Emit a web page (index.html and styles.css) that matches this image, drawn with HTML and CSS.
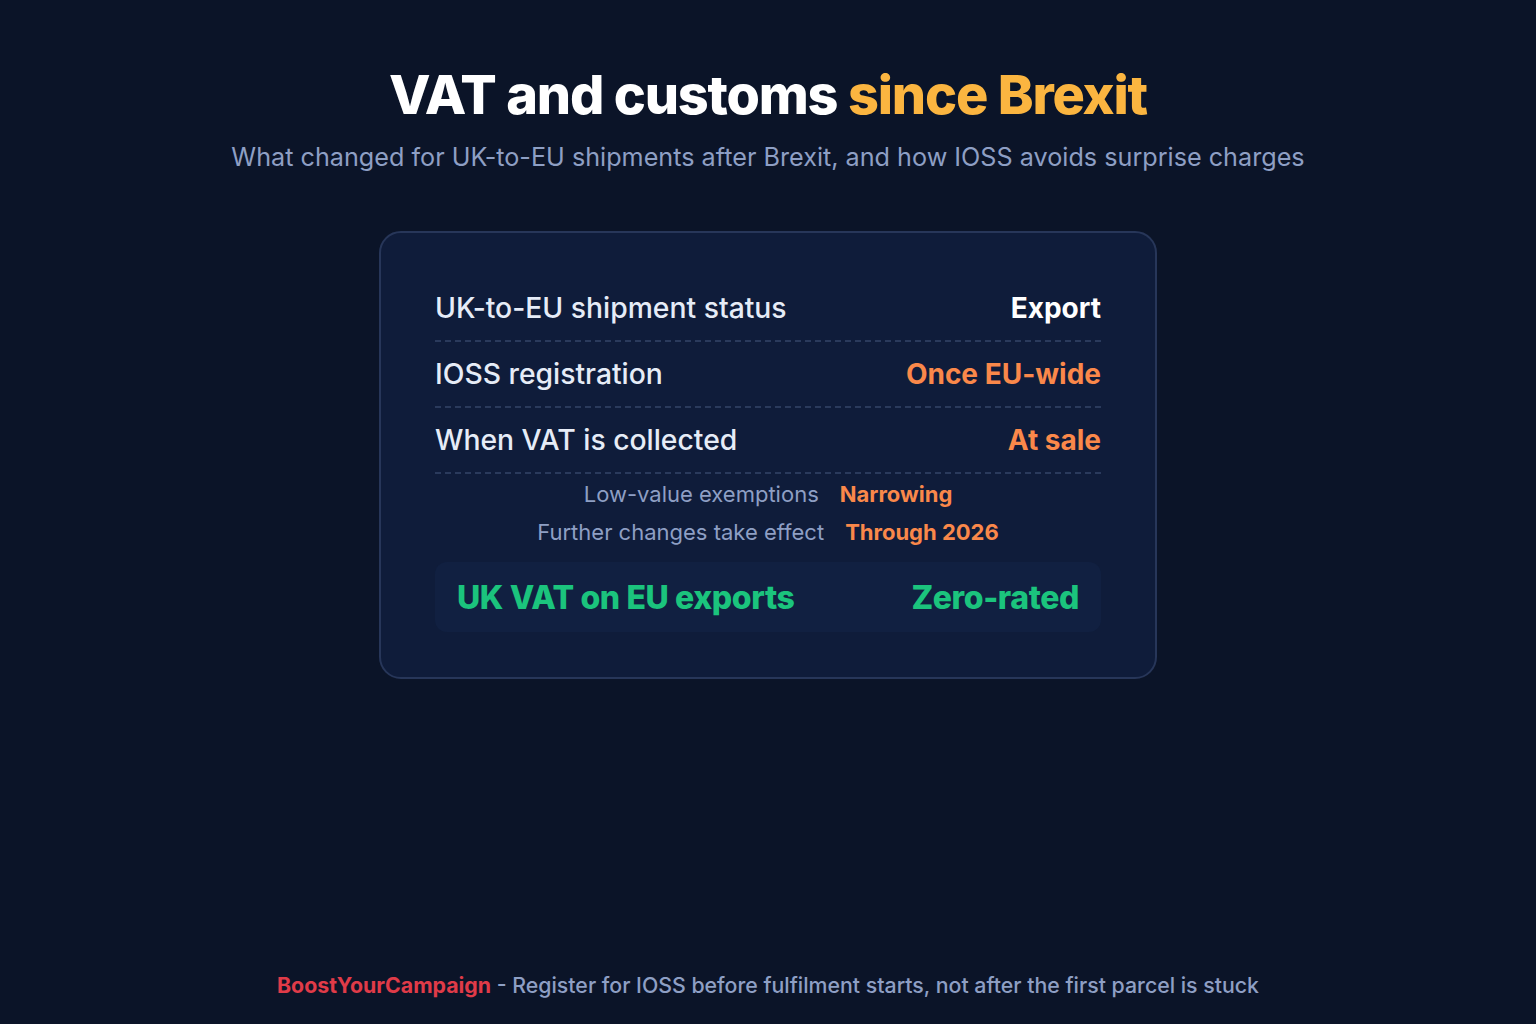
FILE: index.html
```html
<!DOCTYPE html>
<html lang="en">
<head>
<meta charset="utf-8">
<title>VAT and customs since Brexit</title>
<link rel="stylesheet" href="styles.css">
</head>
<body>
<main class="page">
  <header class="hero">
    <h1 class="title">VAT and customs <span class="accent">since Brexit</span></h1>
    <p class="subtitle">What changed for UK-to-EU shipments after Brexit, and how IOSS avoids surprise charges</p>
  </header>
  <section class="card">
    <div class="row">
      <span class="label">UK-to-EU shipment status</span>
      <span class="value value-white">Export</span>
    </div>
    <div class="row">
      <span class="label">IOSS registration</span>
      <span class="value value-orange">Once EU-wide</span>
    </div>
    <div class="row">
      <span class="label">When VAT is collected</span>
      <span class="value value-orange">At sale</span>
    </div>
    <div class="notes">
      <div class="note"><span class="note-label">Low-value exemptions</span><span class="note-value">Narrowing</span></div>
      <div class="note"><span class="note-label">Further changes take effect</span><span class="note-value">Through 2026</span></div>
    </div>
    <div class="highlight">
      <span>UK VAT on EU exports</span>
      <span>Zero-rated</span>
    </div>
  </section>
  <footer class="footer">
    <span class="brand">BoostYourCampaign</span> - Register for IOSS before fulfilment starts, not after the first parcel is stuck
  </footer>
</main>
</body>
</html>
```
FILE: styles.css
```css
* { box-sizing: border-box; }
html, body { margin: 0; padding: 0; }
body {
  background: #0b1428;
  font-family: Inter, "Noto Sans", "Liberation Sans", sans-serif;
  color: #e6ecf7;
  width: 1536px;
  height: 1024px;
  overflow: hidden;
}
.page {
  height: 1024px;
  display: flex;
  flex-direction: column;
  align-items: center;
}
.hero {
  display: flex;
  flex-direction: column;
  align-items: center;
  padding-top: 62px;
}
.title {
  margin: 0;
  font-size: 54px;
  font-weight: 800;
  letter-spacing: -1.2px;
  line-height: 66px;
  color: #ffffff;
}
.accent { color: #fbb540; }
.subtitle {
  margin: 14px 0 0;
  font-size: 25.2px;
  line-height: 30px;
  color: #8e9fc4;
  font-weight: 400;
}
.card {
  margin-top: 59px;
  width: 778px;
  background: #0f1c3a;
  border: 2px solid #273659;
  border-radius: 22px;
  padding: 43px 54px 45px;
  display: flex;
  flex-direction: column;
}
.row {
  display: flex;
  justify-content: space-between;
  align-items: center;
  height: 66px;
  border-bottom: 2px dashed #2a3a5c;
}
.label {
  font-size: 28.3px;
  font-weight: 500;
  color: #e6ecf7;
}
.value {
  font-size: 28px;
  font-weight: 700;
}
.value-white { color: #ffffff; }
.value-orange { color: #fa884a; }
.notes {
  display: flex;
  flex-direction: column;
  align-items: center;
  padding-top: 6px;
  gap: 10px;
}
.note {
  display: flex;
  gap: 21px;
  font-size: 22px;
  line-height: 28px;
}
.note-label { color: #8e9fc4; }
.note-value { color: #fa884a; font-weight: 700; }
.highlight {
  margin-top: 16px;
  height: 70px;
  border-radius: 12px;
  background: #112041;
  display: flex;
  justify-content: space-between;
  align-items: center;
  padding: 0 22px;
  color: #1bc47d;
  font-size: 32px;
  font-weight: 800;
  letter-spacing: -0.4px;
}
.footer {
  margin-top: auto;
  margin-bottom: 26px;
  font-size: 21.3px;
  font-weight: 500;
  color: #8e9fc4;
}
.brand { color: #e03b48; font-weight: 700; }
```
